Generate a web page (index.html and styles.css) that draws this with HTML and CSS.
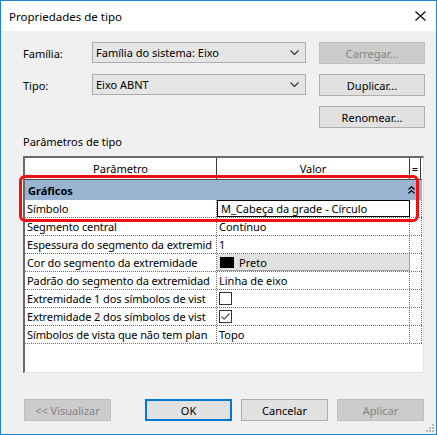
FILE: index.html
```html
<!DOCTYPE html>
<html lang="pt">
<head>
<meta charset="utf-8">
<title>Propriedades de tipo</title>
<link rel="stylesheet" href="styles.css">
</head>
<body>
<div class="window">
  <div class="titlebar">
    <span class="title">Propriedades de tipo</span>
    <svg class="close" width="11" height="10" viewBox="0 0 11 10"><path d="M0.5 0.5 L10.5 9.5 M10.5 0.5 L0.5 9.5" stroke="#000" stroke-width="1.1" fill="none"/></svg>
  </div>
  <div class="content">
    <div class="top">
      <span class="lbl">Família:</span>
      <div class="combo"><span>Família do sistema: Eixo</span><svg class="arrow" width="9" height="5" viewBox="0 0 9 5"><path d="M0.5 0.5 L4.5 4.5 L8.5 0.5" stroke="#333" stroke-width="1.2" fill="none"/></svg></div>
      <div class="btn disabled">Carregar...</div>
      <span class="lbl">Tipo:</span>
      <div class="combo"><span>Eixo ABNT</span><svg class="arrow" width="9" height="5" viewBox="0 0 9 5"><path d="M0.5 0.5 L4.5 4.5 L8.5 0.5" stroke="#333" stroke-width="1.2" fill="none"/></svg></div>
      <div class="btn">Duplicar...</div>
      <div class="btn col3">Renomear...</div>
    </div>
    <div class="section-label">Parâmetros de tipo</div>
    <div class="table">
      <div class="thead">
        <div class="th">Parâmetro</div>
        <div class="th">Valor</div>
        <div class="th eq">=</div>
      </div>
      <div class="group">
        <span>Gráficos</span>
        <svg class="dchev" width="7" height="8" viewBox="0 0 7 8"><path d="M0.5 3.5 L3.5 0.8 L6.5 3.5 M0.5 7.3 L3.5 4.6 L6.5 7.3" stroke="#000" stroke-width="1.3" fill="none"/></svg>
      </div>
      <div class="row"><div class="c1">Símbolo</div><div class="c2 edit">M_Cabeça da grade - Círculo</div><div class="c3"></div></div>
      <div class="row"><div class="c1">Segmento central</div><div class="c2">Contínuo</div><div class="c3"></div></div>
      <div class="row"><div class="c1">Espessura do segmento da extremid</div><div class="c2">1</div><div class="c3"></div></div>
      <div class="row"><div class="c1">Cor do segmento da extremidade</div><div class="c2 colorbtn"><span class="swatch"></span><span>Preto</span></div><div class="c3"></div></div>
      <div class="row"><div class="c1">Padrão do segmento da extremidad</div><div class="c2">Linha de eixo</div><div class="c3"></div></div>
      <div class="row"><div class="c1">Extremidade 1 dos símbolos de vist</div><div class="c2"><span class="check"></span></div><div class="c3"></div></div>
      <div class="row"><div class="c1">Extremidade 2 dos símbolos de vist</div><div class="c2"><span class="check"><svg width="11" height="11" viewBox="0 0 11 11"><path d="M1.5 5.5 L4.2 8.2 L9.5 2.5" stroke="#555" stroke-width="1.2" fill="none"/></svg></span></div><div class="c3"></div></div>
      <div class="row"><div class="c1">Símbolos de vista que não tem plan</div><div class="c2">Topo</div><div class="c3"></div></div>
      <div class="highlight"></div>
    </div>
    <div class="footer">
      <div class="btn disabled">&lt;&lt; Visualizar</div>
      <div class="btn ok">OK</div>
      <div class="btn">Cancelar</div>
      <div class="btn disabled">Aplicar</div>
    </div>
  </div>
  <svg class="grip" width="10" height="10" viewBox="0 0 10 10">
    <rect x="7" y="1" width="2" height="2" fill="#b8b8b8"/>
    <rect x="4" y="4" width="2" height="2" fill="#b8b8b8"/>
    <rect x="7" y="4" width="2" height="2" fill="#b8b8b8"/>
    <rect x="1" y="7" width="2" height="2" fill="#b8b8b8"/>
    <rect x="4" y="7" width="2" height="2" fill="#b8b8b8"/>
    <rect x="7" y="7" width="2" height="2" fill="#b8b8b8"/>
  </svg>
</div>
</body>
</html>
```

FILE: styles.css
```css
* { box-sizing: border-box; }
html, body { margin: 0; padding: 0; }
body {
  font-family: "Noto Sans", "Open Sans", sans-serif;
  font-size: 11px;
  color: #000;
  background: #fff;
}
.window {
  position: relative;
  width: 437px;
  height: 435px;
  border: 1px solid #1883d7;
  background: #f0f0f0;
  display: flex;
  flex-direction: column;
}
.titlebar {
  height: 30px;
  background: #fff;
  display: flex;
  align-items: center;
  justify-content: space-between;
  padding: 0 10px 0 8px;
  flex: none;
}
.title { font-size: 11.5px; }
.close { display: block; }
.content {
  flex: 1;
  padding: 11px 0 0 22px;
  display: flex;
  flex-direction: column;
}
.top {
  display: grid;
  grid-template-columns: 56px 214px 106px;
  grid-template-rows: 22px 22px 22px;
  column-gap: 13px;
  row-gap: 10px;
  align-items: center;
}
.combo {
  height: 21px;
  background: #e5e5e5;
  border: 1px solid #adadad;
  display: flex;
  align-items: center;
  justify-content: space-between;
  padding: 0 5px 0 3px;
  align-self: start;
}
.arrow { display: block; margin-right: 1px; }
.btn {
  height: 22px;
  background: #e1e1e1;
  border: 1px solid #adadad;
  display: flex;
  align-items: center;
  justify-content: center;
}
.btn.disabled {
  background: #cccccc;
  border-color: #bfbfbf;
  color: #838383;
}
.top .col3 { grid-column: 3; }
.section-label {
  margin-top: 6px;
  height: 16px;
  line-height: 16px;
}
.table {
  position: relative;
  width: 401px;
  height: 217px;
  background: #fff;
  border-left: 2px solid #696969;
  border-top: 2px solid #696969;
  border-right: 1px solid #e3e3e3;
  border-bottom: 1px solid #e3e3e3;
  margin-top: 6px;
}
.thead {
  display: grid;
  grid-template-columns: 192px 193px 11px;
  height: 22px;
  border-bottom: 1px solid #4a4a4a;
  width: 397px;
}
.th {
  display: flex;
  align-items: center;
  justify-content: center;
  border-right: 1px solid #3c3c3c;
}
.group {
  height: 20px;
  width: 397px;
  background: #99b4d1;
  display: flex;
  align-items: center;
  justify-content: space-between;
  padding: 0 7px 0 3px;
  font-weight: bold;
}
.dchev { display: block; }
.row {
  display: grid;
  grid-template-columns: 192px 193px 12px;
  height: 18px;
  width: 397px;
  border-bottom: 1px dotted #707070;
}
.row > div {
  border-right: 1px dotted #707070;
  white-space: nowrap;
  overflow: hidden;
  padding-left: 3px;
  line-height: 17px;
}
.row > .c1 { letter-spacing: -0.1px; padding-left: 2px; }
.row > .c2 { padding-left: 2px; }
.row > .c2.edit {
  border: 1px solid #000;
  padding-left: 3px;
  line-height: 16px;
}
.row > .c2.colorbtn {
  background: #e1e1e1;
  border-right: 1px solid #a0a0a0;
  border-bottom: 1px solid #a0a0a0;
  display: flex;
  align-items: center;
  gap: 5px;
  padding-left: 3px;
}
.swatch {
  display: inline-block;
  width: 14px;
  height: 11px;
  background: #000;
}
.check {
  display: inline-block;
  width: 13px;
  height: 13px;
  border: 1px solid #333;
  background: #fff;
  margin-top: 2px;
  vertical-align: top;
}
.check svg { display: block; }
.highlight {
  position: absolute;
  left: -6px;
  top: 17px;
  width: 400px;
  height: 47px;
  border: 3px solid #ee1111;
  border-radius: 6px;
  pointer-events: none;
}
.footer {
  display: flex;
  margin-top: 26px;
  padding-left: 1px;
}
.footer .btn { width: 87px; }
.footer .btn + .btn { margin-left: 9px; }
.footer .ok {
  margin-left: 34px !important;
  border: 2px solid #0078d7;
}
.grip {
  position: absolute;
  right: 1px;
  bottom: 1px;
}
```
